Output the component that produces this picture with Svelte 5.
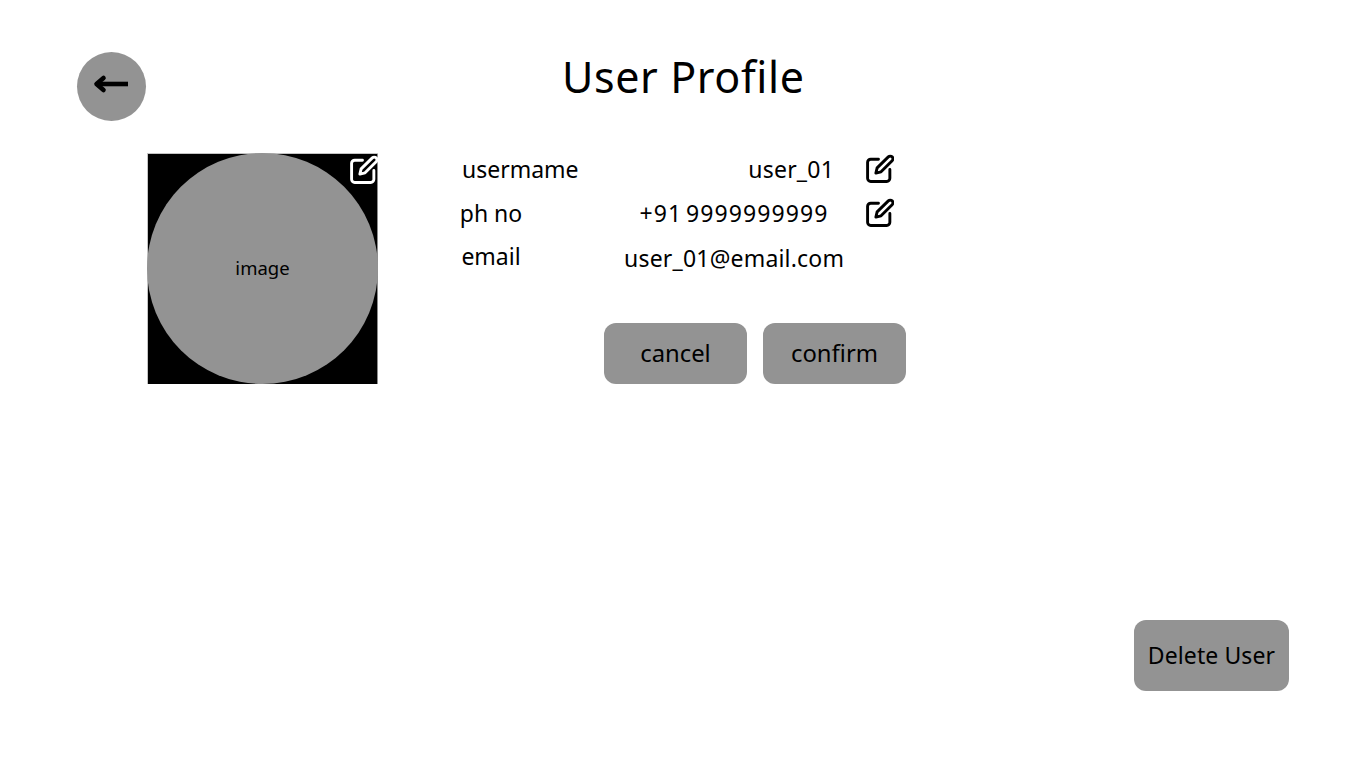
<script>
  const fields = [
    { key: 'username', label: 'usermame', value: 'user_01', editable: true },
    { key: 'phone', label: 'ph no', value: '+91 9999999999', editable: true },
    { key: 'email', label: 'email', value: 'user_01@email.com', editable: false }
  ];
</script>

{#snippet editIcon()}
  <svg class="edit-icon" viewBox="0 0 28 28" fill="none" stroke="currentColor" stroke-width="2.8" stroke-linecap="round" stroke-linejoin="round">
    <path d="M13 5H5.500A3 3 0 0 0 2.500 8v15.500a3 3 0 0 0 3 3H21a3 3 0 0 0 3-3V15" />
    <path d="M22.500 2.800a2.600 2.600 0 0 1 3.700 3.700L15.500 17.200l-5 1.200 1.200-5z" />
  </svg>
{/snippet}

<div class="page">
  <header class="header">
    <button class="back" aria-label="back">
      <svg viewBox="0 0 38 20" fill="none" stroke="currentColor" stroke-width="4.6" stroke-linecap="butt" stroke-linejoin="round">
        <path d="M36 10H5" />
        <path d="M11.500 4L4.500 10l7 6" stroke-linecap="round" />
      </svg>
    </button>
    <h1>User Profile</h1>
  </header>

  <main class="profile">
    <div class="avatar">
      <div class="circle">image</div>
      <span class="avatar-edit">{@render editIcon()}</span>
    </div>

    <div class="details">
      <div class="fields">
        {#each fields as field (field.key)}
          <div class="row {field.key}">
            <span class="label">{field.label}</span>
            <span class="value">{field.value}</span>
            {#if field.editable}
              <button class="edit" aria-label="edit {field.label}">{@render editIcon()}</button>
            {/if}
          </div>
        {/each}
      </div>
      <div class="actions">
        <button class="btn">cancel</button>
        <button class="btn">confirm</button>
      </div>
    </div>
  </main>

  <button class="delete">Delete User</button>
</div>

<style>
  :global(body) {
    background: #fff;
  }
  .page {
    box-sizing: border-box;
    height: 768px;
    padding: 52px 77px 77px;
    display: flex;
    flex-direction: column;
    font-family: 'Noto Sans', sans-serif;
    color: #000;
  }
  button {
    font: inherit;
    color: inherit;
    border: none;
    padding: 0;
    background: none;
  }
  .header {
    display: flex;
    height: 69px;
  }
  .back {
    width: 69px;
    height: 69px;
    border-radius: 50%;
    background: #939393;
    display: flex;
    align-items: center;
    justify-content: center;
    padding: 0 2px 6px 0;
    flex: none;
  }
  .back svg {
    width: 38px;
    height: 20px;
  }
  h1 {
    margin: 0 0 0 416px;
    font-size: 43px;
    font-weight: 400;
    line-height: 50px;
    letter-spacing: 0.6px;
  }
  .profile {
    display: flex;
    margin: 32px 0 0 70px;
  }
  .avatar {
    position: relative;
    width: 231px;
    height: 231px;
    background: #000;
    box-shadow: inset 1px 1px 0 #c4c4c4, inset -1px 0 0 #8c8c8c;
    flex: none;
  }
  .circle {
    width: 100%;
    height: 100%;
    border-radius: 50%;
    background: #939393;
    display: flex;
    align-items: center;
    justify-content: center;
    font-size: 18.500px;
    padding-bottom: 2px;
    box-sizing: border-box;
  }
  .avatar-edit {
    position: absolute;
    top: 2px;
    right: 0;
    color: #fff;
    display: flex;
  }
  .edit-icon {
    width: 29px;
    height: 29px;
    display: block;
  }
  .details {
    margin-left: 82px;
  }
  .fields {
    display: flex;
    flex-direction: column;
    margin-top: -6px;
  }
  .row {
    display: grid;
    grid-template-columns: 62px 220px 28px;
    height: 44px;
    align-items: center;
    font-size: 23px;
    white-space: nowrap;
  }
  .label {
    justify-self: center;
  }
  .value {
    margin-left: 102px;
    width: 220px;
    text-align: center;
    letter-spacing: 0.2px;
  }
  .edit {
    margin: 0 0 2px 123px;
    width: 29px;
    height: 29px;
  }
  .username .label {
    justify-self: start;
    margin-left: 2px;
  }
  .username .value {
    text-align: right;
    padding-right: 10px;
    box-sizing: border-box;
  }
  .phone .value {
    letter-spacing: 1.1px;
    word-spacing: -3.500px;
  }
  .email .label {
    margin-bottom: 3px;
  }
  .email .value {
    margin-top: 1px;
  }
  .actions {
    display: flex;
    gap: 16px;
    margin: 44px 0 0 144px;
  }
  .btn {
    width: 143px;
    height: 61px;
    border-radius: 12px;
    background: #939393;
    font-size: 23.800px;
    padding-bottom: 2px;
  }
  .delete {
    align-self: flex-end;
    margin-top: auto;
    width: 155px;
    height: 71px;
    border-radius: 12px;
    background: #939393;
    font-size: 23px;
    letter-spacing: 0.1px;
    padding-bottom: 1px;
  }
</style>
